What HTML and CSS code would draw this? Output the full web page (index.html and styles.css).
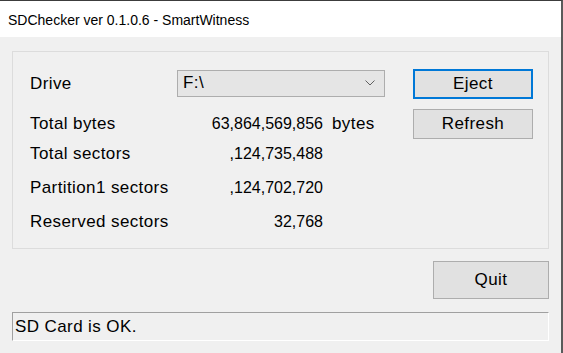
FILE: index.html
```html
<!DOCTYPE html>
<html lang="en">
<head>
    <meta charset="UTF-8">
    <meta name="viewport" content="width=device-width, initial-scale=1.0">
    <title>SDChecker</title>
    <link rel="stylesheet" href="styles.css">
</head>
<body>

<div class="window">
    <div class="title-bar">SDChecker ver 0.1.0.6 - SmartWitness</div>

    <div class="client">
        <!-- Drive info -->
        <div class="group-box">
            <div class="info-grid">
                <div class="label">Drive</div>
                <div class="combo">
                    <span>F:\</span>
                    <svg class="chevron" width="10" height="6" viewBox="0 0 10 6">
                        <path d="M0.5 0.5 L5 5 L9.5 0.5" fill="none" stroke="#606060" stroke-width="1"/>
                    </svg>
                </div>

                <div class="label">Total bytes</div>
                <div class="value"><span class="num">63,864,569,856</span><span class="unit">bytes</span></div>

                <div class="label">Total sectors</div>
                <div class="value"><span class="num">,124,735,488</span></div>

                <div class="label">Partition1 sectors</div>
                <div class="value"><span class="num">,124,702,720</span></div>

                <div class="label">Reserved sectors</div>
                <div class="value"><span class="num">32,768</span></div>
            </div>

            <div class="side-buttons">
                <button class="button default">Eject</button>
                <button class="button">Refresh</button>
            </div>
        </div>

        <div class="bottom-row">
            <button class="button quit">Quit</button>
        </div>

        <div class="status">SD Card is OK.</div>
    </div>
</div>

</body>
</html>
```

FILE: styles.css
```css
body {
    margin: 0;
    background-color: #f0f0f0;
    font-family: "Liberation Sans", Arial, sans-serif;
    color: #000;
}
.window {
    width: 561px;
    height: 352px;
    border-top: 1px solid #3c3c3c;
    border-right: 2px solid #5a5a5a;
    background-color: #f0f0f0;
}
.title-bar {
    height: 36px;
    line-height: 38px;
    padding-left: 8px;
    background-color: #fff;
    font-family: "Liberation Sans", Arial, sans-serif;
    font-size: 14px;
}
.client {
    padding: 14px 12px 0 12px;
}
.group-box {
    display: flex;
    height: 196px;
    border: 1px solid #dcdcdc;
    padding: 0 15px 0 17px;
}
.info-grid {
    display: grid;
    grid-template-columns: 147px 208px;
    grid-template-rows: 50px 30px 30px 38px 30px;
    align-items: center;
    padding-top: 7px;
    font-size: 17px;
    letter-spacing: 0.4px;
}
.combo {
    display: flex;
    justify-content: space-between;
    align-items: center;
    height: 25px;
    margin-top: -2px;
    padding: 0 5px;
    border: 1px solid #adadad;
    background-color: #e5e5e5;
}
.chevron {
    margin-right: 4px;
}
.value {
    display: flex;
    align-items: center;
}
.num {
    width: 146px;
    text-align: right;
    font-size: 16px;
    letter-spacing: 0;
}
.unit {
    margin-left: 9px;
}
.side-buttons {
    display: flex;
    flex-direction: column;
    gap: 10px;
    margin-left: auto;
    padding-top: 17px;
}
.button {
    width: 120px;
    height: 30px;
    border: 1px solid #adadad;
    background-color: #e1e1e1;
    font-family: "Liberation Sans", Arial, sans-serif;
    font-size: 17px;
    letter-spacing: 0.4px;
    color: #000;
    padding: 0;
}
.button.default {
    border: 2px solid #0078d7;
}
.bottom-row {
    display: flex;
    justify-content: flex-end;
    margin-top: 12px;
}
.button.quit {
    width: 116px;
    height: 38px;
}
.status {
    margin-top: 13px;
    height: 27px;
    line-height: 28px;
    padding-left: 2px;
    border-top: 1px solid #a0a0a0;
    border-left: 1px solid #a0a0a0;
    border-bottom: 1px solid #fff;
    border-right: 1px solid #fff;
    font-size: 17px;
    letter-spacing: 0.4px;
}
```
